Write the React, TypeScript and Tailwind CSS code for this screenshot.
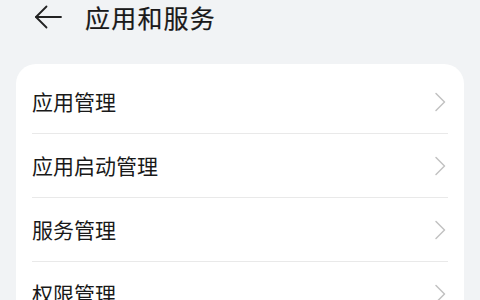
const items = ["应用管理", "应用启动管理", "服务管理", "权限管理"];

function Chevron() {
  return (
    <svg width="12" height="20" viewBox="0 0 12 20" fill="none" stroke="#c2c2c2" strokeWidth="1.5" strokeLinecap="round" strokeLinejoin="round">
      <path d="M2 1.5L10.5 10L2 18.5" />
    </svg>
  );
}

export default function App() {
  return (
    <div
      className="w-[480px] h-[300px] overflow-hidden bg-[#f1f3f5] text-[#191919]"
      style={{ fontFamily: '"Noto Sans CJK SC", "Noto Sans", sans-serif' }}
    >
      <header className="flex items-center h-[34px] pl-[34px]">
        <svg width="28" height="24" viewBox="0 0 28 24" fill="none" stroke="#222" strokeWidth="1.8" strokeLinecap="round" strokeLinejoin="round">
          <path d="M27 12H2" />
          <path d="M12.5 1.5L2 12L12.5 22.5" />
        </svg>
        <h1 className="ml-[23px] text-[25px] tracking-[1.2px] font-normal leading-none [-webkit-text-stroke:0.2px_#191919]">
          应用和服务
        </h1>
      </header>

      <div className="mx-4 mt-[30px] rounded-[20px] bg-white pt-[6px]">
        {items.map((label) => (
          <div key={label} className="flex items-center h-[64px] mx-4 border-b border-[#e9e9e9]">
            <span className="flex-1 text-[21px] leading-none">{label}</span>
            <div className="mr-[2px]">
              <Chevron />
            </div>
          </div>
        ))}
      </div>
    </div>
  );
}
